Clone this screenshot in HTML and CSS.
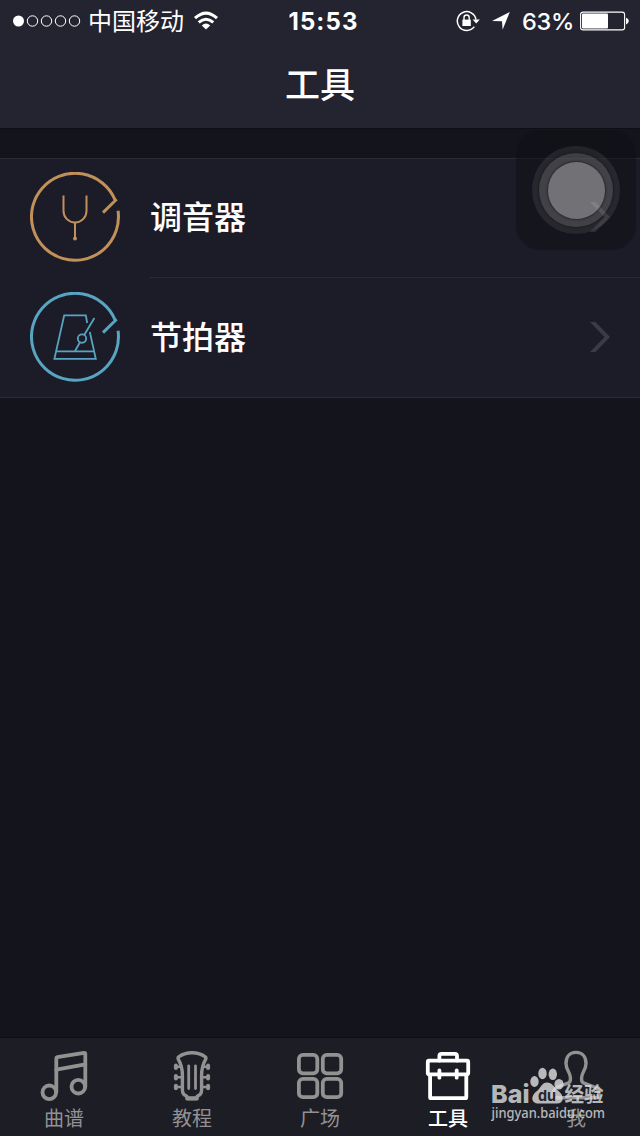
FILE: index.html
```html
<!DOCTYPE html>
<html lang="zh-CN">
<head>
  <meta charset="UTF-8" />
  <meta name="viewport" content="width=device-width, initial-scale=1.0" />
  <title>工具</title>
  <link rel="stylesheet" href="styles.css">
</head>
<body>

  <header class="header">
    <div class="status">
      <div class="status-left">
        <svg class="signal" viewBox="0 0 70 14">
          <circle cx="6.5" cy="7" r="5.5" fill="#fff"/>
          <g fill="none" stroke="#fff" stroke-width="1">
            <circle cx="20.5" cy="7" r="5.2"/>
            <circle cx="34.5" cy="7" r="5.2"/>
            <circle cx="48.5" cy="7" r="5.2"/>
            <circle cx="62.5" cy="7" r="5.2"/>
          </g>
        </svg>
        <span class="carrier">中国移动</span>
        <svg class="wifi" viewBox="0 0 26 20">
          <g fill="none" stroke="#fff" stroke-width="3">
            <path d="M2 7.2 Q13 -3 24 7.2"/>
            <path d="M5.7 11.4 Q13 5 20.3 11.4"/>
          </g>
          <path d="M8.8 14.4 Q13 10.8 17.2 14.4 L13 18.6 Z" fill="#fff"/>
        </svg>
      </div>
      <span class="time">15:53</span>
      <div class="status-right">
        <svg class="lock" viewBox="0 0 24 22">
          <path d="M18.3 16.6 A9.4 9.4 0 1 1 20 9.6" fill="none" stroke="#fff" stroke-width="1.5"/>
          <path d="M16.6 9.6 H23.8 L20.2 13.6 Z" fill="#fff"/>
          <rect x="6.4" y="9.6" width="8.4" height="6.4" fill="#fff"/>
          <path d="M8 10 V7.6 A2.6 2.6 0 0 1 13.2 7.6 V10" fill="none" stroke="#fff" stroke-width="1.4"/>
        </svg>
        <svg class="arrow" viewBox="0 0 18 18">
          <path d="M17.8 0 L10.6 17.8 L10 9.2 L0 9 Z" fill="#fff"/>
        </svg>
        <span class="percent">63%</span>
        <svg class="battery" viewBox="0 0 50 20">
          <rect x="0.6" y="1.1" width="44" height="17.8" rx="2.5" fill="none" stroke="#fff" stroke-width="1.1"/>
          <rect x="2" y="2.6" width="26" height="14.8" rx="1" fill="#fff"/>
          <path d="M46 6.8 Q48.8 7.6 48.8 10 T46 13.4 Z" fill="#fff"/>
        </svg>
      </div>
    </div>
    <h1 class="title">工具</h1>
  </header>

  <main class="content">
    <ul class="list">
      <li class="item">
        <svg class="item-icon tuner" viewBox="0 0 90 90">
          <path d="M88.04 38.7 A43.5 43.5 0 1 1 84.8 27.3 L85.6 28.2 L73 40.6" stroke-width="3"/>
          <g stroke-width="2">
            <path d="M33.5 23.5 V39 A11.5 11.5 0 0 0 56.5 39 V23.5"/>
            <path d="M45 50 V67"/>
          </g>
          <circle cx="45" cy="66.5" r="2" class="dot"/>
        </svg>
        <div class="item-body">
          <span>调音器</span>
          <svg class="chevron under-touch" viewBox="0 0 20 30"><path d="M0 0 H5.5 L20 15 L5.5 30 H0 L14.5 15 Z"/></svg>
        </div>
      </li>
      <li class="item">
        <svg class="item-icon metronome" viewBox="0 0 90 90">
          <path d="M88.04 38.7 A43.5 43.5 0 1 1 84.8 27.3 L85.6 28.2 L73 40.6" stroke-width="3"/>
          <g stroke-width="1.8">
            <path d="M57.2 31 L55.8 23.4 H34.2 L24.4 66.8 H65.8 L59.8 40"/>
            <path d="M26 59.4 H64"/>
            <path d="M64.4 26 L54.2 43 M50 50.2 L45 59"/>
            <circle cx="52" cy="46.6" r="4.2"/>
          </g>
        </svg>
        <div class="item-body">
          <span>节拍器</span>
          <svg class="chevron" viewBox="0 0 20 30"><path d="M0 0 H5.5 L20 15 L5.5 30 H0 L14.5 15 Z"/></svg>
        </div>
      </li>
    </ul>
  </main>

  <nav class="tabs">
    <a class="tab">
      <svg viewBox="0 0 56 56">
        <circle cx="13.3" cy="44.3" r="6.8"/>
        <circle cx="42.3" cy="38.7" r="6.8"/>
        <path d="M20.3 44 V10.4 Q20.3 9.4 21.3 9.2 L48 4.9 Q49.3 4.7 49.3 6 V39"/>
        <path d="M20.3 21.6 L49.3 16.4"/>
      </svg>
      <span>曲谱</span>
    </a>
    <a class="tab">
      <svg viewBox="0 0 56 56">
        <path stroke-width="3.4" d="M28 4.7 Q36 4.7 41.5 9 Q42.4 9.8 41.6 11.4 Q37.6 18.5 37.6 27 V42 Q37.6 46.5 33.5 48 L32.5 50.5 H23.5 L22.5 48 Q18.4 46.5 18.4 42 V27 Q18.4 18.5 14.4 11.4 Q13.6 9.8 14.5 9 Q20 4.7 28 4.7 Z"/>
        <path stroke-width="2.8" d="M24.7 18 V40.5 M31.5 18 V40.5"/>
        <path stroke-width="2.6" d="M12 18.7 H17 M12 29.3 H18 M12 39 H18 M44 18.7 H39 M44 29.3 H38 M44 39 H38"/>
        <path stroke-width="4" d="M11.9 17.5 V19.9 M11.9 28.1 V30.5 M11.9 37.8 V40.2 M44.1 17.5 V19.9 M44.1 28.1 V30.5 M44.1 37.8 V40.2"/>
        <path stroke-width="4.4" d="M23.4 50.4 H32.6"/>
      </svg>
      <span>教程</span>
    </a>
    <a class="tab">
      <svg viewBox="0 0 56 56">
        <rect x="6.9" y="6.9" width="18.4" height="18.4" rx="4"/>
        <rect x="30.8" y="6.9" width="18.4" height="18.4" rx="4"/>
        <rect x="6.9" y="30.8" width="18.4" height="18.4" rx="4"/>
        <rect x="30.8" y="30.8" width="18.4" height="18.4" rx="4"/>
      </svg>
      <span>广场</span>
    </a>
    <a class="tab active">
      <svg viewBox="0 0 56 56">
        <path d="M19.4 12.5 V8 Q19.4 5.8 21.6 5.8 H34.9 Q37 5.8 37 8 V12.5"/>
        <rect x="7.8" y="12.7" width="40.4" height="13.6" rx="1.2"/>
        <path d="M10.1 27 V49.2 Q10.1 50.2 11.1 50.2 H45.3 Q46.3 50.2 46.3 49.2 V27"/>
        <path d="M19.4 22.3 V29.7 M36.7 22.3 V29.7"/>
      </svg>
      <span>工具</span>
    </a>
    <a class="tab">
      <svg viewBox="0 0 56 56">
        <path stroke-width="3.4" d="M28 4.4 C21.5 4.4 18 9 18 15.5 C18 22 22.4 24.5 22.4 29.5 V31.5 Q22.4 34.3 20 35.2 L9.5 39 Q5 41 5 47.5 Q5 49.8 7 49.8 H49 Q51 49.8 51 47.5 Q51 41 46.5 39 L36 35.2 Q33.6 34.3 33.6 31.5 V29.5 C33.6 24.5 38 22 38 15.5 C38 9 34.5 4.4 28 4.4 Z"/>
      </svg>
      <span>我</span>
    </a>
  </nav>

  <!-- floating touch button -->
  <div class="touch">
    <div class="ring"><div class="ring-mid"><div class="ring-core"></div></div></div>
  </div>

  <svg class="watermark" viewBox="0 0 120 60">
    <text class="wm-logo" x="0" y="38" textLength="38.5" lengthAdjust="spacingAndGlyphs">Bai</text>
    <g>
      <ellipse cx="43.5" cy="16.5" rx="4.2" ry="5.4"/>
      <ellipse cx="51.5" cy="8.5" rx="4.2" ry="5.8"/>
      <ellipse cx="61.8" cy="9.3" rx="4.2" ry="5.8"/>
      <ellipse cx="68" cy="19.2" rx="4.6" ry="5.2"/>
      <path d="M56 17.5 C61 17.5 63 22 67 25.5 C74 31 73 38.5 66 38.5 H48 C39 38.5 40 30 46 26 C50 22.5 51 17.5 56 17.5 Z"/>
    </g>
    <text class="wm-du" x="47" y="35.6" textLength="18" lengthAdjust="spacingAndGlyphs">du</text>
    <text class="wm-cn" x="73.5" y="36.5" textLength="39" lengthAdjust="spacingAndGlyphs">经验</text>
    <text class="wm-url" x="0.5" y="53" textLength="113.5" lengthAdjust="spacingAndGlyphs">jingyan.baidu.com</text>
  </svg>

</body>
</html>
```

FILE: styles.css
```css
* {
  box-sizing: border-box;
}

body {
  margin: 0;
  height: 1136px;
  display: flex;
  flex-direction: column;
  position: relative;
  overflow: hidden;
  background: #14141d;
  color: #fff;
  font-family: "Inter", "Noto Sans CJK SC", sans-serif;
}

svg {
  display: block;
  flex-shrink: 0;
}

.header {
  height: 129px;
  background: #242330;
  border-bottom: 1px solid #0e0e14;
}

.status {
  height: 41px;
  display: grid;
  grid-template-columns: 1fr auto 1fr;
  align-items: center;
  padding: 0 11px 0 12px;
}

.status-left,
.status-right {
  display: flex;
  align-items: center;
}

.status-right {
  justify-content: flex-end;
}

.signal {
  width: 70px;
  height: 14px;
}

.carrier {
  margin-left: 6px;
  padding-bottom: 2px;
  font-size: 24px;
  line-height: 38px;
  font-family: "Noto Sans CJK SC", sans-serif;
}

.wifi {
  width: 26px;
  height: 20px;
  margin-left: 9px;
}

.time {
  font-size: 24px;
  font-weight: 700;
  letter-spacing: 1.1px;
  padding: 1px 0 0 6px;
}

.lock {
  width: 24px;
  height: 22px;
}

.arrow {
  width: 18px;
  height: 18px;
  margin-left: 12px;
}

.percent {
  margin-left: 12px;
  padding-top: 1px;
  font-size: 23.5px;
  font-weight: 500;
  letter-spacing: -0.3px;
}

.battery {
  width: 50px;
  height: 20px;
  margin: 0 -1px 0 6px;
}

.title {
  margin: 0;
  font-size: 35px;
  line-height: 89px;
  font-weight: 500;
  text-align: center;
}

.content {
  flex: 1;
  padding-top: 29px;
}

.list {
  margin: 0;
  padding: 0;
  list-style: none;
  background: #1c1b28;
  border-top: 1px solid #2b2a36;
  border-bottom: 1px solid #2b2a36;
}

.item {
  height: 118px;
  display: flex;
  align-items: flex-start;
  padding: 13px 0 0 30px;
}

.item + .item {
  height: 120px;
  padding-top: 15px;
}

.item-icon {
  width: 90px;
  height: 90px;
  fill: none;
}

.tuner {
  stroke: #c29059;
}

.tuner .dot {
  fill: #c29059;
  stroke: none;
}

.metronome {
  stroke: #57a5c0;
}

.item-body {
  flex: 1;
  height: 90px;
  display: flex;
  align-items: center;
  justify-content: space-between;
  margin-left: 30px;
  padding-right: 30px;
  font-size: 32px;
  font-weight: 500;
}

.item-body span {
  padding-bottom: 4px;
}

.item + .item .item-body {
  height: 105px;
  margin-top: -15px;
  padding-top: 14px;
  border-top: 1px solid #2b2a36;
}

.chevron {
  width: 20px;
  height: 30px;
  fill: #3b3a46;
}

.under-touch {
  fill: #4c4b55;
}

.tabs {
  height: 99px;
  display: flex;
  background: #1d1d26;
  border-top: 1px solid #0e0e15;
  padding-top: 10px;
}

.tab {
  flex: 1;
  display: flex;
  flex-direction: column;
  align-items: center;
  color: #929292;
  font-size: 20px;
  line-height: 30px;
}

.tab svg {
  width: 56px;
  height: 56px;
  fill: none;
  stroke: currentColor;
  stroke-width: 3.8;
  stroke-linecap: round;
  stroke-linejoin: round;
}

.active {
  color: #fff;
  font-weight: 500;
}

.touch {
  position: absolute;
  left: 516px;
  top: 130px;
  width: 120px;
  height: 120px;
  display: flex;
  align-items: center;
  justify-content: center;
  border-radius: 24px;
  background: rgba(14, 16, 18, 0.5);
}

.ring,
.ring-mid,
.ring-core {
  display: flex;
  align-items: center;
  justify-content: center;
  border-radius: 50%;
}

.ring {
  width: 88px;
  height: 88px;
  background: rgba(255, 255, 255, 0.08);
}

.ring-mid {
  width: 74px;
  height: 74px;
  background: rgba(255, 255, 255, 0.12);
  box-shadow: 0 0 2px 1px rgba(0, 0, 0, 0.3);
}

.ring-core {
  width: 57px;
  height: 57px;
  background: rgba(255, 255, 255, 0.26);
  box-shadow: 0 0 2px 1px rgba(0, 0, 0, 0.4);
}

.watermark {
  position: absolute;
  left: 491px;
  top: 1065px;
  width: 120px;
  height: 60px;
  fill: rgba(225, 225, 225, 0.8);
}

.wm-logo {
  font: 800 25px "Inter", sans-serif;
}

.wm-du {
  font: 700 15px "Inter", sans-serif;
  fill: #24242d;
}

.wm-cn {
  font: 700 20px "Noto Sans CJK SC", sans-serif;
}

.wm-url {
  font: 500 13.5px "Noto Sans", sans-serif;
}
```
